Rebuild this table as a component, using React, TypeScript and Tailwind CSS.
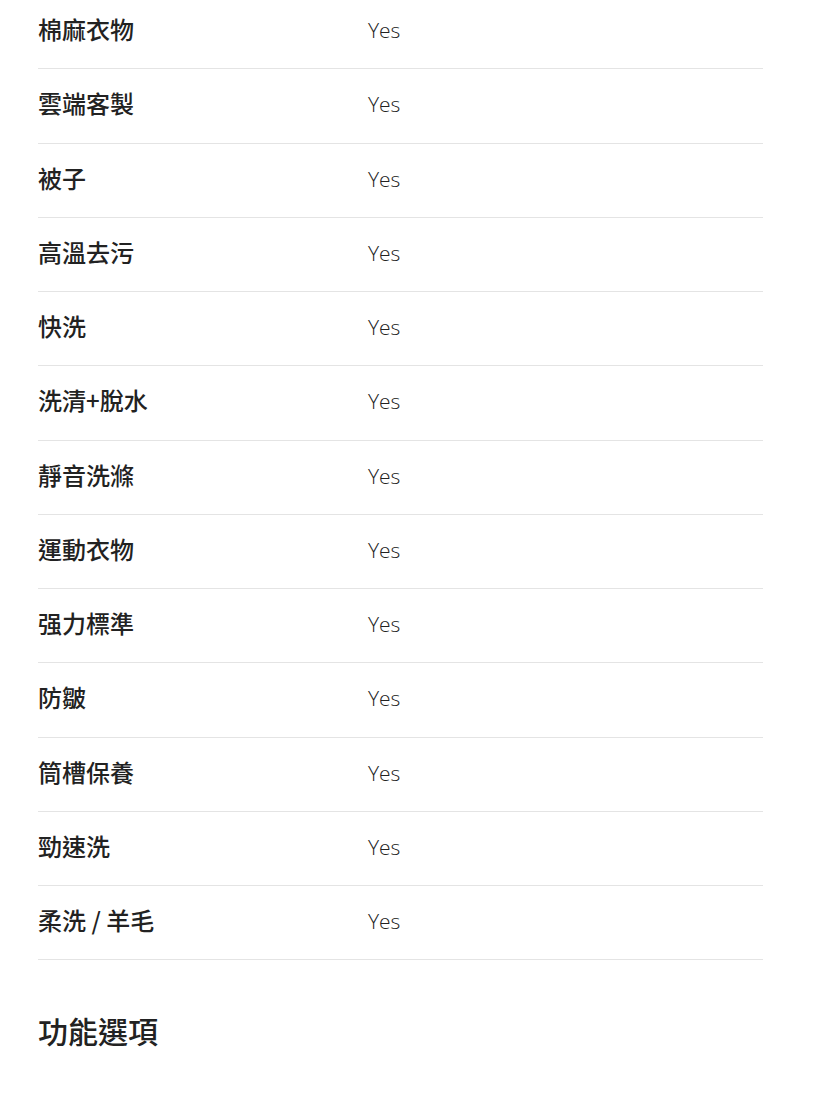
const rows = [
  "棉麻衣物",
  "雲端客製",
  "被子",
  "高溫去污",
  "快洗",
  "洗清+脫水",
  "靜音洗滌",
  "運動衣物",
  "强力標準",
  "防皺",
  "筒槽保養",
  "勁速洗",
  "柔洗 / 羊毛",
];

export default function App() {
  return (
    <div className="bg-white min-h-[1103px] overflow-hidden">
      <div className="ml-[38px] w-[725px] -mt-[5px]">
        {/* Spec table */}
        <div>
          {rows.map((label) => (
            <div
              key={label}
              className="flex items-center pt-[23px] pb-[25px] border-b border-[#e4e4e4]"
            >
              <div
                className="w-[330px] pb-[3px] text-[24px] leading-[22px] font-medium text-[#222]"
                style={{ fontFamily: '"Noto Sans CJK TC", "Noto Sans", sans-serif' }}
              >
                {label}
              </div>
              <div
                className="text-[21px] leading-[25.25px] font-light text-[#222]"
                style={{ fontFamily: '"Open Sans", "Noto Sans CJK TC", sans-serif' }}
              >
                Yes
              </div>
            </div>
          ))}
        </div>

        {/* Section heading */}
        <h2
          className="mt-[52px] text-[30px] leading-[36px] font-medium text-[#222]"
          style={{ fontFamily: '"Noto Sans CJK TC", "Noto Sans", sans-serif' }}
        >
          功能選項
        </h2>
      </div>
    </div>
  );
}
